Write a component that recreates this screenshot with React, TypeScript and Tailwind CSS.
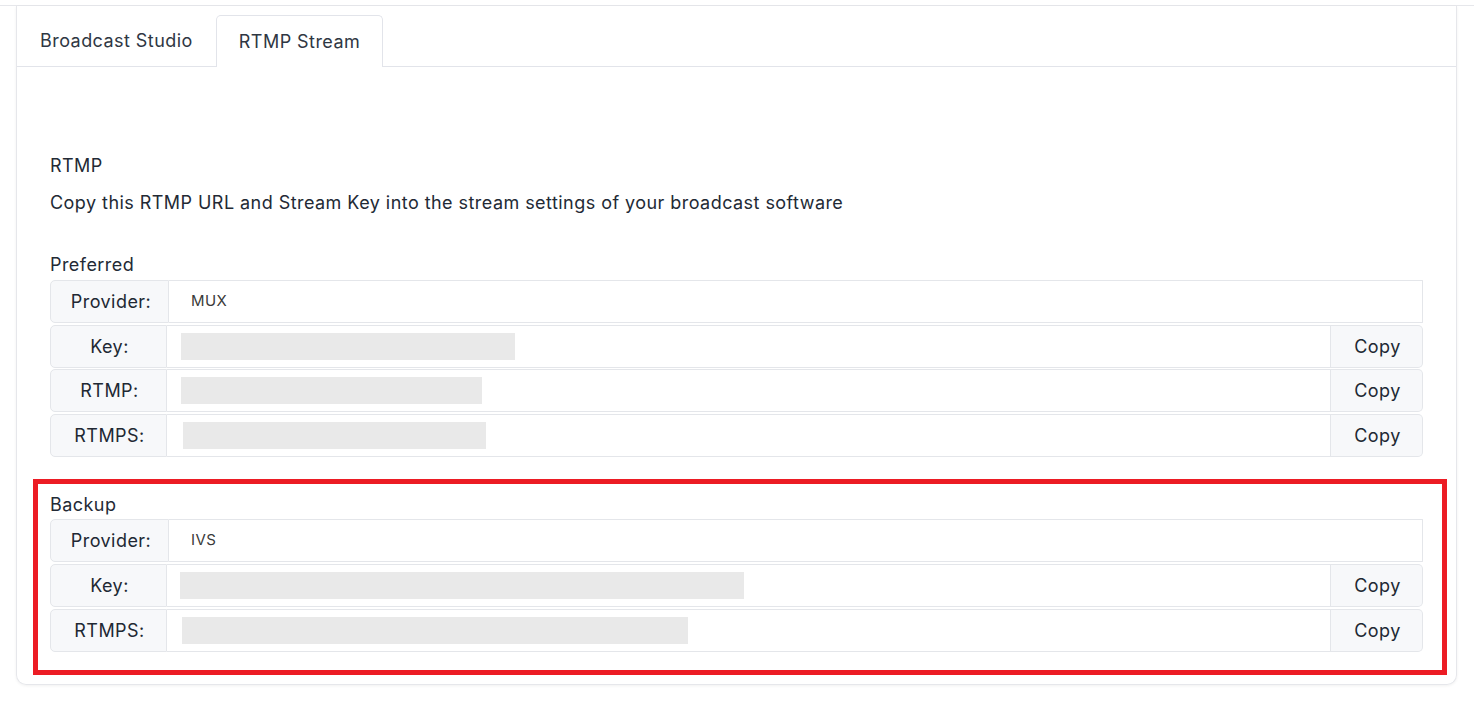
import React from "react";

const font = { fontFamily: "Inter, 'Noto Sans', sans-serif" };

function Row({
  label,
  value,
  bar,
  copy,
  wide,
}: {
  label: string;
  value?: string;
  bar?: { l: number; w: number };
  copy?: boolean;
  wide?: boolean;
}) {
  return (
    <div className="flex h-[43px]">
      <div
        className={`${wide ? "w-[119px] pl-[3px]" : "w-[117px] pl-[2px]"} shrink-0 flex items-center justify-center bg-[#f7f8fa] border border-[#e4e6ea] rounded-l-[5px] text-[18px] tracking-[0.45px] text-[#212833]`}
      >
        {label}
      </div>
      <div
        className={`flex-1 flex items-center border-y border-r border-[#e4e6ea] bg-white ${copy ? "" : "rounded-r-[1px]"}`}
      >
        {value && <span className="pl-[22px] text-[15px] text-[#3a3a3a] tracking-[0.4px]">{value}</span>}
        {bar && <div className="h-[27px] bg-[#e9e9e9]" style={{ marginLeft: bar.l, width: bar.w }} />}
      </div>
      {copy && (
        <div className="w-[92px] shrink-0 flex items-center justify-center pl-[2px] bg-[#f7f8fa] border-y border-r border-[#e4e6ea] rounded-r-[5px] text-[18px] tracking-[0.45px] text-[#212833]">
          Copy
        </div>
      )}
    </div>
  );
}

export default function App() {
  return (
    <div className="w-[1474px] h-[714px] bg-white overflow-hidden tracking-[0.45px]" style={font}>
      <div className="h-[6px] border-b border-[#e6e7eb]" />
      <div className="mx-[16px] w-[1441px] border-x border-b border-[#e6e7eb] rounded-b-[10px] shadow-[0_1px_3px_rgba(0,0,0,0.06)] pb-[9px]">
        <div className="flex pt-[9px] border-b border-[#e2e4ea]">
          <div className="h-[51px] px-[22px] flex items-center text-[18px] text-[#2f3743] border border-transparent">
            Broadcast Studio
          </div>
          <div className="h-[52px] -mb-px px-[22px] flex items-center text-[18px] text-[#2f3743] bg-white border border-b-0 border-[#e2e4ea] rounded-t-[5px]">
            RTMP Stream
          </div>
        </div>
        <div className="px-[33px] pt-[85px]">
          <div className="text-[18px] leading-[27px] text-[#232a35]">RTMP</div>
          <div className="mt-[10px] text-[18px] leading-[27px] text-[#232a35]">
            Copy this RTMP URL and Stream Key into the stream settings of your broadcast software
          </div>
          <div className="mt-[35px] text-[18px] leading-[27px] text-[#232a35]">Preferred</div>
          <div className="mt-[2px] flex flex-col gap-[1.5px]">
            <Row label="Provider:" value="MUX" wide />
            <Row label="Key:" bar={{ l: 14, w: 334 }} copy />
            <Row label="RTMP:" bar={{ l: 14, w: 301 }} copy />
            <Row label="RTMPS:" bar={{ l: 16, w: 303 }} copy />
          </div>
          <div className="mt-[22px] -ml-[17px] -mr-[24px] border-[5px] border-[#ec1c24] pl-[12px] pr-[19px] pt-[7px] pb-[18px]">
            <div className="text-[18px] leading-[27px] text-[#232a35]">Backup</div>
            <div className="mt-[1px] flex flex-col gap-[2px]">
              <Row label="Provider:" value="IVS" wide />
              <Row label="Key:" bar={{ l: 13, w: 564 }} copy />
              <Row label="RTMPS:" bar={{ l: 15, w: 506 }} copy />
            </div>
          </div>
        </div>
      </div>
    </div>
  );
}
